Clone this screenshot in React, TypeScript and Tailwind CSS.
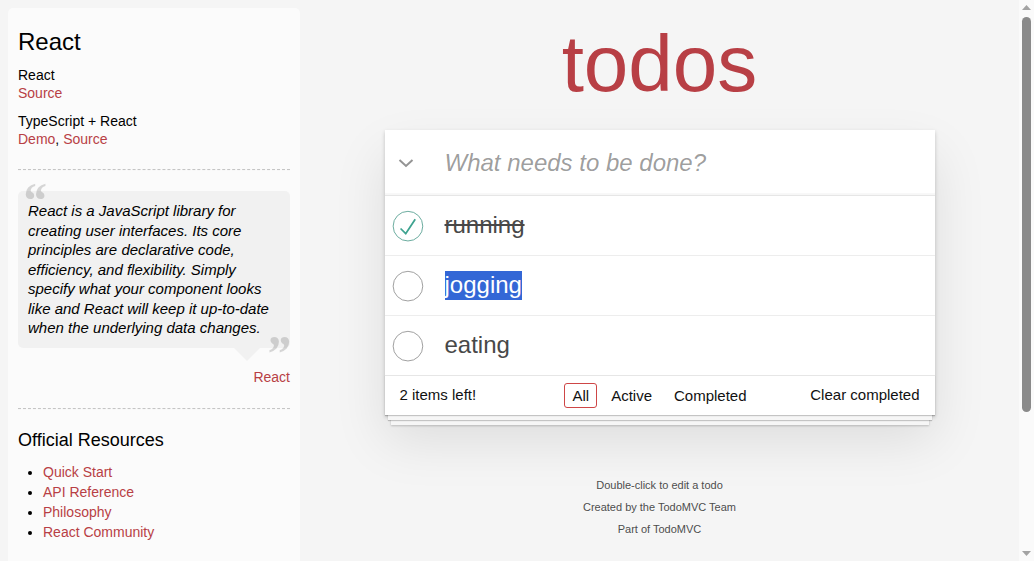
import React from "react";

const todos = [
  { id: 1, title: "running", completed: true, selected: false },
  { id: 2, title: "jogging", completed: false, selected: true },
  { id: 3, title: "eating", completed: false, selected: false },
];

const resources = ["Quick Start", "API Reference", "Philosophy", "React Community"];

function Toggle({ checked }: { checked: boolean }) {
  return (
    <svg width="40" height="40" viewBox="-10 -18 100 135" className="shrink-0">
      <circle cx="50" cy="50" r="50" fill="none" stroke={checked ? "#59A193" : "#949494"} strokeWidth="3" />
      {checked && <path fill="#3EA390" d="M72 25L42 71 27 56l-4 4 20 20 34-52z" />}
    </svg>
  );
}

function Sidebar() {
  return (
    <aside className="ml-2 mt-2 mb-2 w-[292px] shrink-0 rounded-[5px] bg-white/60 p-[10px] text-black">
      <h3 className="mt-[10px] text-[24px] leading-[28px]">React</h3>
      <h5 className="mt-[10px] text-[14px] leading-[18px]">React</h5>
      <a className="block text-[14px] leading-[18px] text-[#b83f45]">Source</a>
      <h5 className="mt-[10px] text-[14px] leading-[18px]">TypeScript + React</h5>
      <div className="text-[14px] leading-[18px]">
        <a className="text-[#b83f45]">Demo</a>, <a className="text-[#b83f45]">Source</a>
      </div>

      <hr className="mt-[21px] border-0 border-t border-b border-dashed border-t-[#c5c5c5] border-b-[#f7f7f7]" />

      {/* quote */}
      <blockquote className="relative mt-[20px] rounded-[5px] bg-black/[0.04] p-[10px]">
        <span className="absolute left-[3px] top-[-19px] font-['Liberation_Serif',serif] text-[50px] italic font-bold leading-[57px] text-black/15">
          &ldquo;
        </span>
        <p className="text-[15px] italic leading-[19.5px]">
          React is a JavaScript library for creating user interfaces. Its core principles are declarative code,
          efficiency, and flexibility. Simply specify what your component looks like and React will keep it
          up-to-date when the underlying data changes.
        </p>
        <span className="absolute right-0 bottom-[-34px] font-['Liberation_Serif',serif] text-[50px] italic font-bold leading-[57px] text-black/15">
          &rdquo;
        </span>
        <span className="absolute right-[30px] top-full h-0 w-0 border-[13px] border-transparent border-t-black/[0.04]" />
      </blockquote>
      <div className="mt-[21px] text-right text-[14px] leading-[16px]">
        <a className="text-[#b83f45]">React</a>
      </div>

      <hr className="mt-[23px] border-0 border-t border-b border-dashed border-t-[#c5c5c5] border-b-[#f7f7f7]" />

      <h4 className="mt-[20px] text-[18px] leading-[21px]">Official Resources</h4>
      <ul className="mt-[11px] list-disc pl-[25px] text-[14px] leading-[20px]">
        {resources.map((r) => (
          <li key={r}>
            <a className="text-[#b83f45]">{r}</a>
          </li>
        ))}
      </ul>

      <h4 className="mt-[20px] text-[18px] leading-[21px]">Community</h4>
      <ul className="mt-[11px] list-disc pl-[25px] text-[14px] leading-[20px]">
        <li>
          <a className="text-[#b83f45]">ReactJS on Stack Overflow</a>
        </li>
      </ul>
    </aside>
  );
}

function Scrollbar() {
  return (
    <div className="flex h-full w-[15px] shrink-0 flex-col items-center bg-[#fafafa] pt-[5px] pb-[5px]">
      <svg width="9" height="5" viewBox="0 0 9 5">
        <path d="M4.5 0L9 5H0z" fill="#a3a3a3" />
      </svg>
      <div className="mt-[7px] h-[395px] w-[9px] rounded-full bg-[#8a8a8a]" />
      <div className="flex-1" />
      <svg width="9" height="5" viewBox="0 0 9 5">
        <path d="M0 0h9L4.5 5z" fill="#a3a3a3" />
      </svg>
    </div>
  );
}

export default function App() {
  return (
    <div className="flex h-screen overflow-hidden bg-[#f5f5f5] font-['Liberation_Sans',Arial,sans-serif] text-[#111]">
      <div className="flex flex-1 items-start overflow-hidden">
        <Sidebar />

        <main className="flex flex-1 flex-col items-center">
          <h1 className="mt-[24px] mb-[26px] text-center text-[80px] font-extralight leading-[80px] text-[#b83f45]">
            todos
          </h1>

          <section className="w-[550px] bg-white shadow-[0_2px_4px_0_rgba(0,0,0,0.2),0_25px_50px_0_rgba(0,0,0,0.1)]">
            {/* header */}
            <div className="flex h-[65px] items-center shadow-[inset_0_-2px_1px_rgba(0,0,0,0.03)]">
              <div className="flex w-[42px] shrink-0 justify-center">
                <svg width="16" height="10" viewBox="0 0 16 10" fill="none">
                  <path d="M1.5 2l6.5 6 6.5-6" stroke="#949494" strokeWidth="2" />
                </svg>
              </div>
              <input
                placeholder="What needs to be done?"
                className="ml-[18px] h-full flex-1 bg-transparent pr-[16px] text-[24px] text-[#484848] outline-none placeholder:italic placeholder:text-black/40"
              />
            </div>

            {/* list */}
            <ul className="border-t border-[#e6e6e6]">
              {todos.map((t, i) => (
                <li
                  key={t.id}
                  className={`flex items-center ${
                    i < todos.length - 1 ? "h-[60px] border-b border-[#ededed]" : "h-[59px]"
                  }`}
                >
                  <Toggle checked={t.completed} />
                  <span
                    className={`ml-[20px] text-[24px] leading-[1.2] ${
                      t.selected ? "bg-[#3367d6] text-white" : "text-[#484848]"
                    } ${t.completed ? "line-through" : ""}`}
                  >
                    {t.title}
                  </span>
                </li>
              ))}
            </ul>

            {/* footer */}
            <footer className="relative grid h-[40px] grid-cols-[1fr_auto_1fr] items-center border-t border-[#e6e6e6] px-[15px] text-[15px] text-[#111] shadow-[0_1px_1px_rgba(0,0,0,0.2),0_8px_0_-3px_#f6f6f6,0_9px_1px_-3px_rgba(0,0,0,0.2),0_16px_0_-6px_#f6f6f6,0_17px_2px_-6px_rgba(0,0,0,0.2)]">
              <span>2 items left!</span>
              <ul className="flex gap-[6px]">
                <li>
                  <a className="block rounded-[3px] border border-[#ce4646] px-[7px] py-[3px] leading-[17px]">All</a>
                </li>
                <li>
                  <a className="block rounded-[3px] border border-transparent px-[7px] py-[3px] leading-[17px]">Active</a>
                </li>
                <li>
                  <a className="block rounded-[3px] border border-transparent px-[7px] py-[3px] leading-[17px]">Completed</a>
                </li>
              </ul>
              <span className="text-right">Clear completed</span>
            </footer>
          </section>

          <footer className="mt-[65px] text-center text-[11px] leading-[11px] text-[#4d4d4d] [text-shadow:0_1px_0_rgba(255,255,255,0.5)]">
            <p>Double-click to edit a todo</p>
            <p className="mt-[11px]">
              Created by the <a>TodoMVC Team</a>
            </p>
            <p className="mt-[11px]">
              Part of <a>TodoMVC</a>
            </p>
          </footer>
        </main>
      </div>

      <Scrollbar />
    </div>
  );
}
